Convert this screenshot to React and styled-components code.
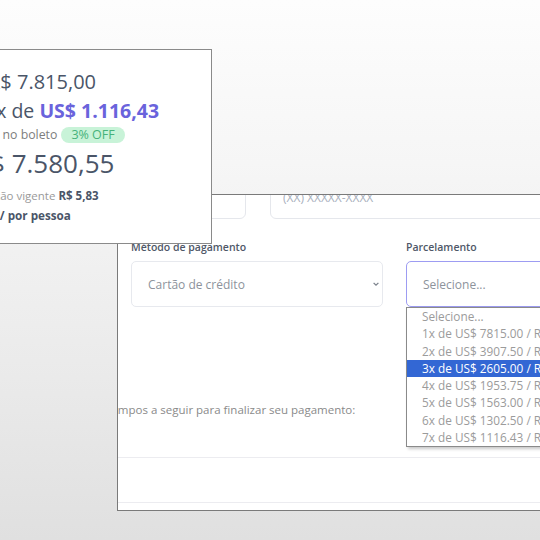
import styled, { createGlobalStyle } from "styled-components";

const GlobalStyle = createGlobalStyle`
  html, body {
    margin: 0;
    height: 540px;
    overflow: hidden;
  }
  body {
    font-family: "Open Sans", "Liberation Sans", sans-serif;
    background: linear-gradient(#fdfdfd 0%, #f6f6f6 30%, #eaeaea 70%, #e0e0e0 100%);
  }
`;

const Desk = styled.div`
  position: relative;
  width: 540px;
  height: 540px;
  overflow: hidden;
`;

// price summary card
const PriceCard = styled.aside`
  position: absolute;
  left: -60px;
  top: 49px;
  z-index: 2;
  width: 272px;
  height: 195px;
  box-sizing: border-box;
  border: 1.5px solid #8a8a8a;
  background: #fff;
  padding: 19px 0 0 19px;
  display: flex;
  flex-direction: column;
  color: #4a5568;
  white-space: nowrap;
`;

const OldPrice = styled.div`
  font-size: 20px;
  line-height: 26px;
  margin-left: ${(p) => p.$shift}px;
`;

const Installment = styled.div`
  font-size: 19.5px;
  line-height: 26px;
  margin-top: 3px;
  margin-left: ${(p) => p.$shift}px;

  strong {
    color: #6a63dc;
    font-weight: 700;
  }
`;

const CashRow = styled.div`
  display: flex;
  align-items: center;
  gap: 4px;
  font-size: 12.3px;
  line-height: 20px;
  color: #7d7d7d;
  margin-top: 1px;
  margin-left: ${(p) => p.$shift}px;
`;

const Badge = styled.span`
  background: #c8f3d8;
  color: #46b27a;
  border-radius: 10px;
  padding: 0 10px;
  font-size: 12.5px;
  line-height: 16px;
`;

const CashPrice = styled.div`
  font-size: 26px;
  line-height: 32px;
  margin-top: 2px;
  margin-left: ${(p) => p.$shift}px;
`;

const RateNote = styled.div`
  font-size: 11.5px;
  line-height: 18px;
  color: #9a9a9a;
  margin-top: 8px;
  margin-left: ${(p) => p.$shift}px;

  b {
    color: #4a5568;
  }
`;

const PerPerson = styled.div`
  font-size: 11.7px;
  line-height: 18px;
  font-weight: 700;
  margin-top: 1px;
  margin-left: ${(p) => p.$shift}px;
`;

// payment form panel
const Panel = styled.section`
  position: absolute;
  left: 117px;
  top: 194px;
  z-index: 1;
  width: 460px;
  height: 317px;
  box-sizing: border-box;
  border: 1.5px solid #7a7a7a;
  background: #fff;
  overflow: hidden;
  display: flex;
  flex-direction: column;
`;

const PanelBody = styled.div`
  padding-left: 13px;
  display: flex;
  flex-direction: column;
`;

const ContactRow = styled.div`
  display: grid;
  grid-template-columns: 115px 1fr;
  gap: 24px;
  margin-top: -20px;
`;

const TextInput = styled.input`
  height: 44px;
  box-sizing: border-box;
  border: 1px solid #e5e7ec;
  border-radius: 6px;
  padding: 0 12px;
  font-family: inherit;
  font-size: 12px;
  outline: none;

  &::placeholder {
    color: #a9b1be;
  }
`;

const FieldGrid = styled.div`
  display: grid;
  grid-template-columns: 252px 252px;
  gap: 23px;
  margin-top: 20px;
`;

const Field = styled.div`
  position: relative;
  display: flex;
  flex-direction: column;
`;

const Label = styled.label`
  font-size: 10.5px;
  line-height: 16px;
  font-weight: 600;
  color: #4f5868;
  margin-bottom: 6px;
`;

const SelectBox = styled.div`
  height: 46px;
  box-sizing: border-box;
  display: flex;
  align-items: center;
  justify-content: space-between;
  padding: 0 1px 0 16px;
  border: 1px solid ${(p) => (p.$focused ? "#9d9cf2" : "#e7e9ee")};
  border-radius: 5px;
  font-size: 12px;
  color: #8d939c;
`;

const OptionList = styled.ul`
  position: absolute;
  top: 100%;
  left: 0;
  width: 260px;
  margin: 0;
  padding: 0;
  list-style: none;
  background: #fff;
  border: 1px solid #8a8a8a;
  box-shadow: 2px 2px 3px rgba(0, 0, 0, 0.22);
`;

const Option = styled.li`
  height: 17.3px;
  line-height: 17.3px;
  padding-left: 15px;
  font-size: 11.8px;
  white-space: nowrap;
  color: ${(p) => (p.$active ? "#fff" : "#9b9b9b")};
  background: ${(p) => (p.$active ? "#3367d4" : "transparent")};
`;

const Intro = styled.p`
  margin: 93px 0 0 -94px;
  font-size: 11.5px;
  line-height: 20px;
  color: #8a8a8a;
  white-space: nowrap;
`;

const PanelFooter = styled.div`
  margin-top: auto;
  margin-bottom: 7px;
  height: 46px;
  box-sizing: border-box;
  border-top: 1px solid #ececf0;
  border-bottom: 1px solid #ececf0;
`;

function Chevron() {
  return (
    <svg width="10" height="10" viewBox="0 0 10 10">
      <path d="M2.6 3.9 L5 6.2 L7.4 3.9" fill="none" stroke="#7a808a" strokeWidth="1.3" />
    </svg>
  );
}

const installments = [
  "1x de US$ 7815.00 / R$ 7.815,00",
  "2x de US$ 3907.50 / R$ 3.907,50",
  "3x de US$ 2605.00 / R$ 2.605,00",
  "4x de US$ 1953.75 / R$ 1.953,75",
  "5x de US$ 1563.00 / R$ 1.563,00",
  "6x de US$ 1302.50 / R$ 1.302,50",
  "7x de US$ 1116.43 / R$ 1.116,43",
];

export default function App() {
  return (
    <Desk>
      <GlobalStyle />
      <PriceCard>
        <OldPrice $shift={28}>R$ 7.815,00</OldPrice>
        <Installment $shift={25}>
          7x de <strong>US$ 1.116,43</strong>
        </Installment>
        <CashRow $shift={3}>
          à vista no boleto <Badge>3% OFF</Badge>
        </CashRow>
        <CashPrice $shift={14}>R$ 7.580,55</CashPrice>
        <RateNote $shift={10}>
          Cotação vigente <b>R$ 5,83</b>
        </RateNote>
        <PerPerson $shift={7}>valor / por pessoa</PerPerson>
      </PriceCard>

      <Panel>
        <PanelBody>
          <ContactRow>
            <TextInput />
            <TextInput placeholder="(XX) XXXXX-XXXX" />
          </ContactRow>
          <FieldGrid>
            <Field>
              <Label>Método de pagamento</Label>
              <SelectBox>
                Cartão de crédito
                <Chevron />
              </SelectBox>
            </Field>
            <Field>
              <Label>Parcelamento</Label>
              <SelectBox $focused>Selecione...</SelectBox>
              <OptionList>
                <Option>Selecione...</Option>
                {installments.map((text, i) => (
                  <Option key={text} $active={i === 2}>
                    {text}
                  </Option>
                ))}
              </OptionList>
            </Field>
          </FieldGrid>
          <Intro>Preencha os campos a seguir para finalizar seu pagamento:</Intro>
        </PanelBody>
        <PanelFooter />
      </Panel>
    </Desk>
  );
}
